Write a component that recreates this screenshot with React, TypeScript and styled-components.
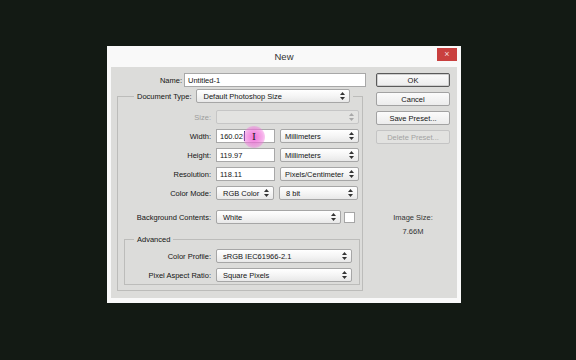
import React from 'react';
import styled, { createGlobalStyle } from 'styled-components';

const GlobalStyle = createGlobalStyle`
  html, body {
    margin: 0;
    padding: 0;
    background: #131a14;
    width: 576px;
    height: 360px;
    overflow: hidden;
  }
  * {
    box-sizing: border-box;
  }
`;

const Arrows = ({ disabled }: { disabled?: boolean }) => (
  <svg width="5" height="8" viewBox="0 0 5 8">
    <polygon points="0,3 2.5,0 5,3" fill={disabled ? '#a8a8a8' : '#333'} />
    <polygon points="0,5 2.5,8 5,5" fill={disabled ? '#a8a8a8' : '#333'} />
  </svg>
);

type SelectProps = {
  value?: string;
  width: number;
  pad?: number;
  disabled?: boolean;
};

const Select = ({ value, width, pad = 6, disabled }: SelectProps) => (
  <SelectBox $w={width} $pad={pad} $disabled={disabled}>
    <span>{value}</span>
    <Arrows disabled={disabled} />
  </SelectBox>
);

const App = () => {
  return (
    <>
      <GlobalStyle />
      <Page>
        <Dialog>
          <TitleBar>
            New
            <CloseButton>×</CloseButton>
          </TitleBar>
          <Body>
            <LeftCol>
              <Row>
                <Label $w={65}>Name:</Label>
                <TextInput $w={182}>Untitled-1</TextInput>
              </Row>
              <Group>
                <Legend $offset={16}>
                  <Label>Document Type:</Label>
                  <Select value="Default Photoshop Size" width={154} />
                </Legend>
                <Rows>
                  <Row>
                    <Label $w={93} $disabled>Size:</Label>
                    <Select width={143} disabled />
                  </Row>
                  <Row>
                    <Label $w={93}>Width:</Label>
                    <TextInput $w={59}>
                      160.02
                      <Caret />
                      <Highlight>
                        <IBeam>I</IBeam>
                      </Highlight>
                    </TextInput>
                    <Select value="Millimeters" width={79} pad={4} />
                  </Row>
                  <Row>
                    <Label $w={93}>Height:</Label>
                    <TextInput $w={59}>119.97</TextInput>
                    <Select value="Millimeters" width={79} pad={4} />
                  </Row>
                  <Row>
                    <Label $w={93}>Resolution:</Label>
                    <TextInput $w={59}>118.11</TextInput>
                    <Select value="Pixels/Centimeter" width={79} pad={4} />
                  </Row>
                  <Row>
                    <Label $w={93}>Color Mode:</Label>
                    <Select value="RGB Color" width={58} />
                    <Select value="8 bit" width={79} pad={6} />
                  </Row>
                  <Row $top={5}>
                    <Label $w={93}>Background Contents:</Label>
                    <Select value="White" width={125} />
                    <Swatch />
                  </Row>
                  <SubGroup>
                    <Legend $offset={9}>
                      <Label>Advanced</Label>
                    </Legend>
                    <Rows>
                      <Row>
                        <Label $w={86}>Color Profile:</Label>
                        <Select value="sRGB IEC61966-2.1" width={136} />
                      </Row>
                      <Row>
                        <Label $w={86}>Pixel Aspect Ratio:</Label>
                        <Select value="Square Pixels" width={136} />
                      </Row>
                    </Rows>
                  </SubGroup>
                </Rows>
              </Group>
            </LeftCol>
            <RightCol>
              <Button $primary>OK</Button>
              <Button>Cancel</Button>
              <Button>Save Preset...</Button>
              <Button $disabled>Delete Preset...</Button>
              <ImageSize>
                <span>Image Size:</span>
                <span>7.66M</span>
              </ImageSize>
            </RightCol>
          </Body>
        </Dialog>
      </Page>
    </>
  );
};

export default App;

const Page = styled.div`
  width: 576px;
  height: 360px;
  padding: 46px 0 0 107px;
  font-family: 'Liberation Sans', Arial, sans-serif;
  font-size: 7.5px;
  color: #141414;
`;

const Dialog = styled.div`
  width: 354px;
  height: 257px;
  background: #f9f9f9;
  padding: 0 4px 5px 4px;
  display: flex;
  flex-direction: column;
`;

const TitleBar = styled.div`
  position: relative;
  height: 21px;
  display: flex;
  align-items: center;
  justify-content: center;
  font-size: 9.5px;
  color: #333;
`;

const CloseButton = styled.div`
  position: absolute;
  top: 2px;
  right: 0;
  width: 20px;
  height: 13px;
  background: #c9403f;
  color: #f4dede;
  font-size: 9px;
  line-height: 13px;
  text-align: center;
`;

const Body = styled.div`
  flex: 1;
  background: #dcdcda;
  display: flex;
  gap: 10px;
  padding: 6px 0 0 6px;
`;

const LeftCol = styled.div`
  width: 249px;
  display: flex;
  flex-direction: column;
`;

const RightCol = styled.div`
  width: 74px;
  display: flex;
  flex-direction: column;
  gap: 5px;
`;

const Row = styled.div<{ $top?: number }>`
  display: flex;
  align-items: center;
  gap: 5px;
  height: 14px;
  margin-top: ${p => p.$top || 0}px;
`;

const Label = styled.span<{ $w?: number; $disabled?: boolean }>`
  ${p => (p.$w ? `width: ${p.$w}px; flex: none;` : '')}
  text-align: right;
  white-space: nowrap;
  color: ${p => (p.$disabled ? '#9c9c9c' : '#141414')};
`;

const TextInput = styled.div<{ $w: number }>`
  position: relative;
  display: flex;
  align-items: center;
  width: ${p => p.$w}px;
  height: 14px;
  padding-left: 3px;
  background: #fff;
  border: 1px solid #a8a8a8;
  margin-left: ${p => (p.$w > 100 ? -3 : 0)}px;
`;

const Caret = styled.span`
  width: 1px;
  height: 10px;
  background: #1c2a6b;
  margin-left: 1px;
`;

const Highlight = styled.div`
  position: absolute;
  left: 26px;
  top: -4px;
  width: 22px;
  height: 22px;
  border-radius: 50%;
  background: radial-gradient(
    circle,
    rgba(238, 90, 210, 0.85) 0%,
    rgba(240, 120, 220, 0.6) 55%,
    rgba(240, 140, 225, 0) 100%
  );
  display: flex;
  align-items: center;
  justify-content: center;
`;

const IBeam = styled.span`
  font-family: 'DejaVu Serif', serif;
  font-size: 10px;
  color: #222;
  line-height: 1;
`;

const SelectBox = styled.div<{ $w: number; $pad: number; $disabled?: boolean }>`
  display: flex;
  align-items: center;
  justify-content: space-between;
  flex: none;
  width: ${p => p.$w}px;
  height: 14px;
  padding: 0 4px 0 ${p => p.$pad}px;
  border: 1px solid ${p => (p.$disabled ? '#c6c6c6' : '#a6a6a6')};
  border-radius: 2px;
  white-space: nowrap;
  overflow: hidden;
  background: ${p =>
    p.$disabled
      ? '#e3e3e1'
      : 'linear-gradient(#ffffff, #f5f5f5 50%, #e8e8e8)'};
`;

const Swatch = styled.div`
  width: 11px;
  height: 11px;
  margin-left: -2px;
  background: #fff;
  border: 1px solid #a6a6a6;
`;

const Group = styled.fieldset`
  width: 246px;
  margin: 2px 0 0 0;
  padding: 7px 0 0 0;
  min-width: 0;
  border: 1px solid #bcbcba;
`;

const SubGroup = styled.fieldset`
  width: 236px;
  margin: 6px 0 5px 6px;
  padding: 5px 0 2px 0;
  min-width: 0;
  border: 1px solid #bcbcba;
`;

const Legend = styled.legend<{ $offset: number }>`
  display: flex;
  align-items: center;
  gap: 5px;
  margin-left: ${p => p.$offset}px;
  padding: 0 3px;
  line-height: 9px;
`;

const Rows = styled.div`
  display: flex;
  flex-direction: column;
  gap: 5px;
`;

const Button = styled.div<{ $primary?: boolean; $disabled?: boolean }>`
  height: 14px;
  display: flex;
  align-items: center;
  justify-content: center;
  border: 1px solid
    ${p => (p.$primary ? '#5a5a5a' : p.$disabled ? '#c4c4c4' : '#a2a2a2')};
  box-shadow: ${p => (p.$primary ? 'inset 0 0 0 1px #cfcfcf' : 'none')};
  border-radius: 2px;
  background: ${p =>
    p.$disabled ? '#e2e2e0' : 'linear-gradient(#fbfbfb, #ececec)'};
  color: ${p => (p.$disabled ? '#a2a2a2' : '#141414')};
`;

const ImageSize = styled.div`
  margin-top: 64px;
  display: flex;
  flex-direction: column;
  align-items: center;
  gap: 5px;
  color: #333;
`;
